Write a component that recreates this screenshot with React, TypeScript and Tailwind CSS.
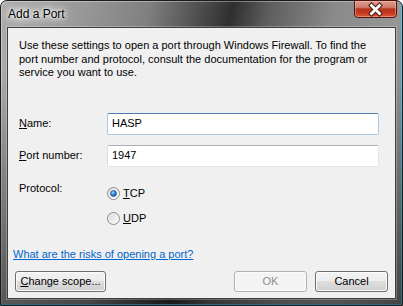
import React from "react";

function Radio({ checked }: { checked: boolean }) {
  return (
    <svg width="13" height="13" viewBox="0 0 13 13" className="shrink-0">
      <defs>
        <linearGradient id={checked ? "rgA" : "rgB"} x1="0" y1="0" x2="1" y2="1">
          <stop offset="0" stopColor="#d4d4d4" />
          <stop offset="1" stopColor="#ffffff" />
        </linearGradient>
        <radialGradient id="dotG" cx="0.4" cy="0.35" r="0.75">
          <stop offset="0" stopColor="#9fdcff" />
          <stop offset="0.45" stopColor="#2e8ade" />
          <stop offset="1" stopColor="#14467e" />
        </radialGradient>
      </defs>
      <circle cx="6.5" cy="6.5" r="6" fill={checked ? "url(#rgA)" : "url(#rgB)"} stroke="#8b8c8d" />
      <circle cx="6.5" cy="6.5" r="4.6" fill="none" stroke="#f6f6f6" strokeWidth="0.8" />
      {checked && <circle cx="6.5" cy="6.5" r="3" fill="url(#dotG)" stroke="#1b4a7c" strokeWidth="0.6" />}
    </svg>
  );
}

function Btn({ children, w, disabled }: { children: React.ReactNode; w: string; disabled?: boolean }) {
  return (
    <div
      className={
        disabled
          ? "h-[21px] rounded-[3px] border border-[#adb2b5] bg-[#f4f4f4] shadow-[inset_0_0_0_1px_#fbfbfb] flex items-center justify-center text-[11px] text-[#8d8d8d] " + w
          : "h-[21px] rounded-[3px] border border-[#707070] bg-[linear-gradient(#f3f3f3_0%,#ececec_50%,#dedede_50%,#d0d0d0_100%)] shadow-[inset_0_0_0_1px_#fcfcfc] flex items-center justify-center text-[11px] text-black " + w
      }
    >
      {children}
    </div>
  );
}

export default function App() {
  return (
    <div className="w-[403px] h-[306px] bg-white font-['Segoe_UI','Liberation_Sans',Arial,sans-serif]">
      <div className="relative w-[403px] h-[306px] rounded-t-[7px] border border-[#1b1b1b] bg-[linear-gradient(102deg,#acacac_0%,#989898_18%,#808080_32%,#4a4a4a_44%,#2f2f2f_50%,#5e5e5e_58%,#8a8a8a_72%,#969696_86%,#7a7a7a_100%)] shadow-[inset_-1px_-1px_0_#4cc0ea,inset_1px_1px_0_rgba(255,255,255,0.35)] flex flex-col px-[6px] pb-[6px]">
        <div className="absolute inset-0 rounded-t-[6px] bg-[linear-gradient(to_bottom,rgba(0,0,0,0)_0%,rgba(0,0,0,0)_25%,rgba(0,0,0,0.45)_100%)] pointer-events-none" />
        {/* title bar */}
        <div className="relative h-[26px] flex items-center pl-[1px]">
          <span className="text-[12px] text-black leading-none [text-shadow:0_0_6px_#ffffff,0_0_3px_#ffffff,0_0_10px_#ffffff,0_0_14px_rgba(255,255,255,0.8)]">Add a Port</span>
        </div>
        {/* close button */}
        <div className="absolute top-[-1px] right-[5px] w-[43px] h-[18px] rounded-b-[4px] border border-[#4a1610] bg-[linear-gradient(#dd9c8e_0%,#cf7a68_40%,#b8321c_50%,#c23a20_75%,#e2573a_100%)] shadow-[inset_0_0_0_1px_rgba(255,200,190,0.45)]">
          <svg width="41" height="16" viewBox="0 0 41 16" className="absolute left-0 top-0">
            <path d="M16.5 4.5 L24.5 12.5 M24.5 4.5 L16.5 12.5" stroke="#4a1a14" strokeWidth="4.8" strokeLinecap="square" fill="none" />
            <path d="M16.5 4.5 L24.5 12.5 M24.5 4.5 L16.5 12.5" stroke="#ffffff" strokeWidth="2.8" strokeLinecap="square" fill="none" />
          </svg>
        </div>
        {/* client area */}
        <div className="relative flex-1 border border-[#3f3f3f] shadow-[0_0_0_1px_rgba(255,255,255,0.25)] bg-[#f0f0f0] flex flex-col text-[11px] text-black">
          <p className="ml-[11px] mt-[11px] leading-[13.5px] whitespace-nowrap">
            Use these settings to open a port through Windows Firewall. To find the
            <br />
            port number and protocol, consult the documentation for the program or
            <br />
            service you want to use.
          </p>
          <div className="flex items-center ml-[11px] mt-[33px]">
            <span className="w-[88px]"><span className="underline">N</span>ame:</span>
            <div className="w-[272px] h-[22px] rounded-[2px] border border-[#a9cbe6] border-t-[#4a7fae] bg-white flex items-center pl-[4px]">
              HASP
            </div>
          </div>
          <div className="flex items-center ml-[11px] mt-[10px]">
            <span className="w-[88px]"><span className="underline">P</span>ort number:</span>
            <div className="w-[272px] h-[22px] rounded-[2px] border border-[#e2e4ea] border-t-[#abadb3] border-l-[#dbdee4] bg-white flex items-center pl-[4px]">
              1947
            </div>
          </div>
          <div className="flex ml-[11px] mt-[14px]">
            <span className="w-[88px] leading-[14px]">Protocol:</span>
            <div className="flex flex-col pt-[6px] gap-[11px]">
              <div className="flex items-center h-[14px] gap-[3px]">
                <Radio checked />
                <span><span className="underline">T</span>CP</span>
              </div>
              <div className="flex items-center h-[14px] gap-[3px]">
                <Radio checked={false} />
                <span><span className="underline">U</span>DP</span>
              </div>
            </div>
          </div>
          <div className="ml-[5px] mt-[21px] leading-[14px]">
            <span className="text-[#0066cc] underline">What are the risks of opening a port?</span>
          </div>
          <div className="flex items-center mt-[10px] pl-[7px] pr-[7px]">
            <Btn w="w-[91px]"><span><span className="underline">C</span>hange scope...</span></Btn>
            <div className="flex-1" />
            <Btn w="w-[73px]" disabled>OK</Btn>
            <div className="w-[8px]" />
            <Btn w="w-[73px]">Cancel</Btn>
          </div>
        </div>
      </div>
    </div>
  );
}
